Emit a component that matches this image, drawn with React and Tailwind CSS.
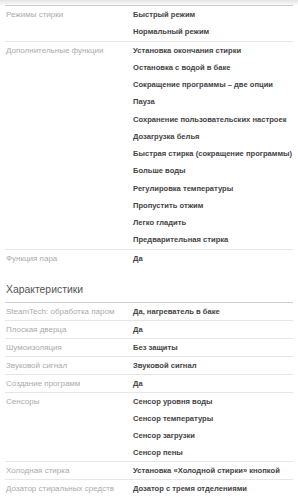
const modes = [
  {
    label: 'Режимы стирки',
    values: ['Быстрый режим', 'Нормальный режим'],
  },
  {
    label: 'Дополнительные функции',
    values: [
      'Установка окончания стирки',
      'Остановка с водой в баке',
      'Сокращение программы – две опции',
      'Пауза',
      'Сохранение пользовательских настроек',
      'Дозагрузка белья',
      'Быстрая стирка (сокращение программы)',
      'Больше воды',
      'Регулировка температуры',
      'Пропустить отжим',
      'Легко гладить',
      'Предварительная стирка',
    ],
  },
  { label: 'Функция пара', values: ['Да'] },
];

const specs = [
  { label: 'SteamTech: обработка паром', values: ['Да, нагреватель в баке'] },
  { label: 'Плоская дверца', values: ['Да'] },
  { label: 'Шумоизоляция', values: ['Без защиты'] },
  { label: 'Звуковой сигнал', values: ['Звуковой сигнал'] },
  { label: 'Создание программ', values: ['Да'] },
  {
    label: 'Сенсоры',
    values: ['Сенсор уровня воды', 'Сенсор температуры', 'Сенсор загрузки', 'Сенсор пены'],
  },
  { label: 'Холодная стирка', values: ['Установка «Холодной стирки» кнопкой'] },
  { label: 'Дозатор стиральных средств', values: ['Дозатор с тремя отделениями'] },
];

function Group({ item, rowClass, first }) {
  return (
    <div className={`flex border-t ${first ? 'border-[#cfcfcf]' : 'border-[#e6e6e6]'}`}>
      <div className={`w-[128px] shrink-0 pl-[1px] pr-[22px] text-[8px] text-[#aaa] overflow-hidden whitespace-nowrap ${rowClass}`}>
        {item.label}
      </div>
      <div className="flex flex-col min-w-0">
        {item.values.map((v, i) => (
          <div key={i} className={`text-[7.6px] font-bold text-[#444] whitespace-nowrap ${rowClass}`}>
            {v}
          </div>
        ))}
      </div>
    </div>
  );
}

export default function App() {
  return (
    <div className="w-[298px] h-[499px] overflow-hidden bg-white font-['Liberation_Sans',Arial,sans-serif]">
      {/* shadow from the block above */}
      <div className="h-[5px] bg-gradient-to-b from-[#e4e4e4] to-[#fafafa]" />

      <div className="px-[5px]">
        {modes.map((item, i) => (
          <Group key={i} item={item} first={i === 0} rowClass="h-[17.25px] leading-[17.25px]" />
        ))}
      </div>

      <h2 className="mt-[16px] mb-[5px] px-[6px] text-[10.4px] leading-[14px] text-[#555] font-normal">
        Характеристики
      </h2>

      <div className="px-[5px]">
        {specs.map((item, i) => (
          <Group key={i} item={item} first={i === 0} rowClass="h-[17px] leading-[17px]" />
        ))}
      </div>
    </div>
  );
}
